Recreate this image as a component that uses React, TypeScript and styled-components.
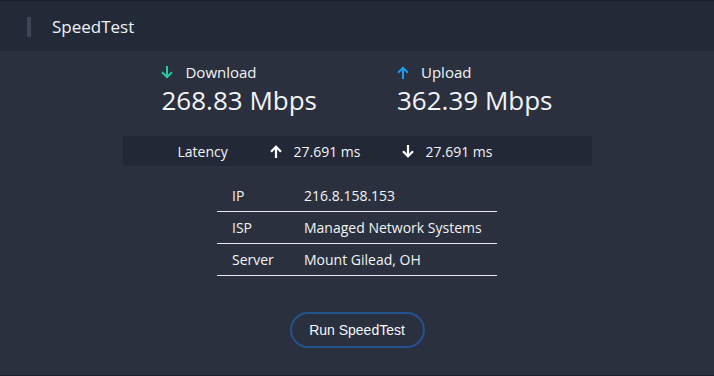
import React from "react";
import styled, { createGlobalStyle } from "styled-components";

const Global = createGlobalStyle`
  html, body { margin: 0; padding: 0; background: #2a303e; }
  body { font-family: "Open Sans", "Noto Sans", sans-serif; color: #f2f4f7; }
  * { box-sizing: border-box; }
`;

const Page = styled.div`
  width: 714px;
  height: 376px;
  display: flex;
  flex-direction: column;
  background: #2a303e;
  border-top: 1px solid #1b1f28;
  border-bottom: 1px solid #1b1f28;
`;

const Header = styled.div`
  height: 50px;
  background: #222937;
  display: flex;
  align-items: center;
  padding-left: 27px;
  gap: 21px;
`;

const Accent = styled.div`
  width: 4px;
  height: 20px;
  background: #3c4456;
  margin-top: 1px;
`;

const Title = styled.div`
  font-size: 17px;
  color: #eef1f6;
  margin-top: 1px;
`;

const Body = styled.div`
  flex: 1;
  display: flex;
  flex-direction: column;
  align-items: center;
`;

const Stats = styled.div`
  display: flex;
  gap: 80px;
  margin-top: 10px;
`;

const Stat = styled.div`
  display: flex;
  flex-direction: column;
`;

const StatLabel = styled.div`
  display: flex;
  align-items: center;
  gap: 12px;
  font-size: 15px;
  height: 22px;
`;

const StatValue = styled.div`
  font-size: 26px;
  line-height: 34px;
  white-space: nowrap;
`;

const LatencyBar = styled.div`
  width: 469px;
  height: 30px;
  margin-top: 19px;
  background: #232836;
  display: flex;
  align-items: center;
  padding-left: 55px;
  font-size: 14px;
`;

const LatencyLabel = styled.span`
  width: 92px;
`;

const LatencyItem = styled.span`
  display: flex;
  align-items: center;
  gap: 12px;
  width: 132px;
`;

const Table = styled.div`
  width: 280px;
  margin-top: 14px;
  display: flex;
  flex-direction: column;
`;

const Row = styled.div`
  display: flex;
  align-items: center;
  height: 32px;
  border-bottom: 1px solid #e6e8ec;
  font-size: 14px;
  padding-left: 15px;
`;

const Key = styled.span`
  width: 72px;
`;

const Button = styled.button`
  margin-top: 36px;
  width: 135px;
  height: 36px;
  border-radius: 18px;
  border: 2px solid #23528f;
  background: transparent;
  color: #f5f7fa;
  font-family: "Liberation Sans", Arial, sans-serif;
  font-size: 14px;
  padding: 0;
  cursor: pointer;
`;

const Arrow = ({ dir, color, w = 2 }: { dir: "up" | "down"; color: string; w?: number }) => (
  <svg width="12" height="13" viewBox="0 0 12 13" style={{ display: "block" }}>
    {dir === "down" ? (
      <g stroke={color} strokeWidth={w} fill="none" strokeLinecap="square">
        <line x1="6" y1="1" x2="6" y2="11" />
        <polyline points="1.8,7 6,11.2 10.2,7" strokeLinejoin="miter" />
      </g>
    ) : (
      <g stroke={color} strokeWidth={w} fill="none" strokeLinecap="square">
        <line x1="6" y1="12" x2="6" y2="2" />
        <polyline points="1.8,6 6,1.8 10.2,6" strokeLinejoin="miter" />
      </g>
    )}
  </svg>
);

export default function App() {
  return (
    <>
      <Global />
      <Page>
        <Header>
          <Accent />
          <Title>SpeedTest</Title>
        </Header>
        <Body>
          <Stats>
            <Stat>
              <StatLabel>
                <Arrow dir="down" color="#1fcf9e" />
                Download
              </StatLabel>
              <StatValue>268.83 Mbps</StatValue>
            </Stat>
            <Stat>
              <StatLabel>
                <Arrow dir="up" color="#1a9cf0" />
                Upload
              </StatLabel>
              <StatValue>362.39 Mbps</StatValue>
            </Stat>
          </Stats>
          <LatencyBar>
            <LatencyLabel>Latency</LatencyLabel>
            <LatencyItem>
              <Arrow dir="up" color="#ffffff" w={2.2} />
              27.691 ms
            </LatencyItem>
            <LatencyItem>
              <Arrow dir="down" color="#ffffff" w={2.2} />
              27.691 ms
            </LatencyItem>
          </LatencyBar>
          <Table>
            <Row>
              <Key>IP</Key>
              <span>216.8.158.153</span>
            </Row>
            <Row>
              <Key>ISP</Key>
              <span>Managed Network Systems</span>
            </Row>
            <Row>
              <Key>Server</Key>
              <span>Mount Gilead, OH</span>
            </Row>
          </Table>
          <Button>Run SpeedTest</Button>
        </Body>
      </Page>
    </>
  );
}
